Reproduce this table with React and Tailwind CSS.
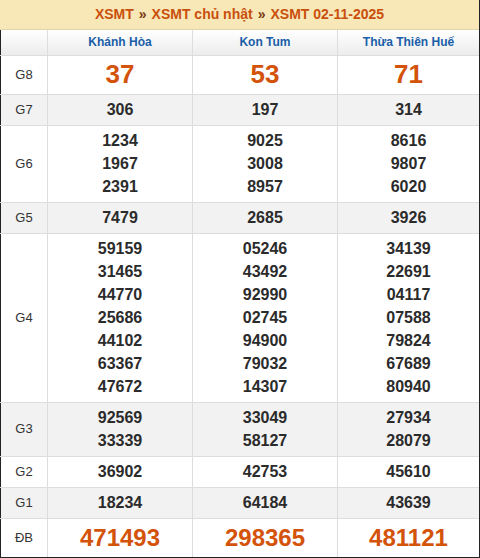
import React from "react";

const provinces = ["Khánh Hòa", "Kon Tum", "Thừa Thiên Huế"];

const rows = [
  { label: "G8", big: true, values: [["37"], ["53"], ["71"]] },
  { label: "G7", values: [["306"], ["197"], ["314"]] },
  { label: "G6", values: [["1234", "1967", "2391"], ["9025", "3008", "8957"], ["8616", "9807", "6020"]] },
  { label: "G5", values: [["7479"], ["2685"], ["3926"]] },
  {
    label: "G4",
    values: [
      ["59159", "31465", "44770", "25686", "44102", "63367", "47672"],
      ["05246", "43492", "92990", "02745", "94900", "79032", "14307"],
      ["34139", "22691", "04117", "07588", "79824", "67689", "80940"],
    ],
  },
  { label: "G3", values: [["92569", "33339"], ["33049", "58127"], ["27934", "28079"]] },
  { label: "G2", values: [["36902"], ["42753"], ["45610"]] },
  { label: "G1", values: [["18234"], ["64184"], ["43639"]] },
  { label: "ĐB", special: true, values: [["471493"], ["298365"], ["481121"]] },
];

export default function App() {
  return (
    <div className="w-[480px] h-[558px] bg-white font-['Liberation_Sans',Arial,sans-serif] text-[#333] border-r border-b border-[#222] overflow-hidden">
      {/* breadcrumb header */}
      <div className="h-[30px] bg-[#f8e7b7] border-b border-[#e0d4b0] flex items-center justify-center text-[14px] font-bold text-[#c9500c]">
        <span>XSMT</span>
        <span className="mx-[5px] text-[#7a3a12]">»</span>
        <span>XSMT chủ nhật</span>
        <span className="mx-[5px] text-[#7a3a12]">»</span>
        <span>XSMT 02-11-2025</span>
      </div>

      <table className="w-full table-fixed border-collapse border-l border-[#222]">
        <colgroup>
          <col className="w-[47px]" />
          <col className="w-[145px]" />
          <col className="w-[145px]" />
          <col />
        </colgroup>
        <thead>
          <tr className="h-[25px] bg-gradient-to-b from-white to-[#ececec]">
            <th className="p-0 border-r border-b border-[#ddd]"></th>
            {provinces.map((p) => (
              <th key={p} className="p-0 border-r border-b border-[#ddd] text-[12px] font-bold text-[#1a5ea8] last:border-r-0">
                {p}
              </th>
            ))}
          </tr>
        </thead>
        <tbody>
          {rows.map((row, i) => (
            <tr key={row.label} className={i % 2 === 1 ? "bg-[#f2f2f2]" : "bg-white"}>
              <td className="p-0 border-r border-b border-[#ddd] text-center text-[13px] text-[#333]">{row.label}</td>
              {row.values.map((col, j) => (
                <td key={j} className="px-0 py-[3.5px] border-r border-b border-[#ddd] text-center last:border-r-0">
                  {col.map((v) => (
                    <div
                      key={v}
                      className={
                        row.big
                          ? "text-[26px] leading-[31px] font-bold text-[#d4530b]"
                          : row.special
                          ? "text-[24px] leading-[31px] font-bold text-[#d4530b]"
                          : "text-[16px] leading-[23px] font-bold text-[#2b2b2b]"
                      }
                    >
                      {v}
                    </div>
                  ))}
                </td>
              ))}
            </tr>
          ))}
        </tbody>
      </table>
    </div>
  );
}
